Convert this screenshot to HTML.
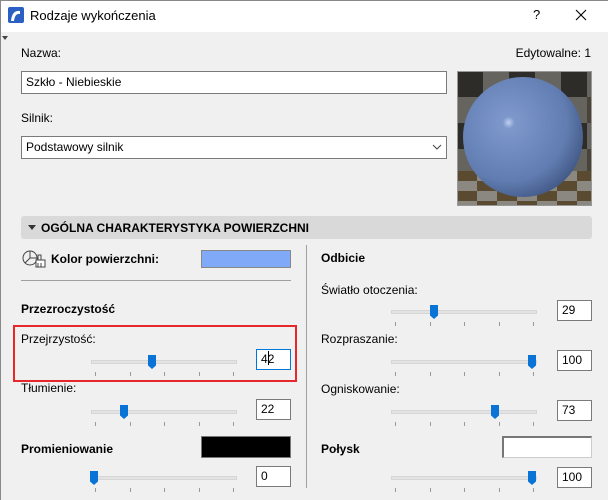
<!DOCTYPE html><html><head><meta charset="utf-8"><style>
*{box-sizing:border-box;margin:0;padding:0}
body{width:608px;height:500px;overflow:hidden;background:#f0f0f0;font-family:"Liberation Sans",sans-serif;font-size:12px;color:#000;position:relative}
.a{position:absolute;white-space:nowrap}
.inp{position:absolute;background:#fff;border:1px solid #7a7a7a;padding-left:4px;line-height:18px}
.b{font-weight:bold}
.tr{position:absolute;height:4px;background:#e3e3e3;border:1px solid #d6d6d6}
.th{position:absolute;width:8px;height:14px;background:#0a74d6;clip-path:polygon(0 0,100% 0,100% 75%,50% 100%,0 75%)}
.tk{position:absolute;width:1px;height:4px;background:#999}
</style></head><body>
<div class="a" style="left:0;top:0;width:608px;height:32px;background:#fff;border-top:1px solid #888"></div>
<div class="a" style="left:0;top:0;width:1px;height:500px;background:#888"></div>
<svg class="a" style="left:8px;top:7px" width="16" height="16"><rect width="16" height="16" rx="2" fill="#2a5fc4"/><path d="M3 14 Q4 3 12 4 L12 7 Q7 6 6 14Z" fill="#fff"/></svg>
<div class="a" style="left:30px;top:8px;font-size:13px">Rodzaje wykończenia</div>
<div class="a" style="left:533px;top:7px;font-size:13px">?</div>
<svg class="a" style="left:575px;top:9px" width="12" height="12"><path d="M1 1L11 11M11 1L1 11" stroke="#000" stroke-width="1.1"/></svg>
<div class="a" style="left:2px;top:36px;border:3px solid transparent;border-top:4px solid #444"></div>
<div class="a" style="left:21px;top:46px">Nazwa:</div>
<div class="a" style="right:17px;top:46px">Edytowalne: 1</div>
<div class="inp" style="left:21px;top:71px;width:426px;height:23px;line-height:21px">Szkło - Niebieskie</div>
<div class="a" style="left:21px;top:111px">Silnik:</div>
<div class="inp" style="left:21px;top:136px;width:426px;height:23px;line-height:21px">Podstawowy silnik</div>
<svg class="a" style="left:432px;top:144px" width="10" height="6"><path d="M1 1L5 5L9 1" stroke="#444" fill="none"/></svg>
<svg class="a" style="left:457px;top:71px" width="135" height="135">
<defs><pattern id="c" width="52" height="52" patternUnits="userSpaceOnUse"><rect width="52" height="52" fill="#66645f"/><rect width="26" height="26" fill="#2e2c28"/><rect x="26" y="26" width="26" height="26" fill="#4a4438"/></pattern>
<pattern id="f" width="40" height="20" patternUnits="userSpaceOnUse"><rect width="40" height="20" fill="#8a8880"/><rect width="20" height="10" fill="#5a4a30"/><rect x="20" y="10" width="20" height="10" fill="#5a4a30"/></pattern>
<radialGradient id="g" cx="0.38" cy="0.38" r="0.7"><stop offset="0" stop-color="#c0d0f0"/><stop offset="0.07" stop-color="#7e98cc"/><stop offset="0.7" stop-color="#607cb0"/><stop offset="1" stop-color="#3e5480"/></radialGradient></defs>
<rect width="135" height="135" fill="url(#c)"/><rect y="100" width="135" height="35" fill="url(#f)"/>
<circle cx="66" cy="66" r="60" fill="url(#g)"/>
<rect x="0.5" y="0.5" width="134" height="134" fill="none" stroke="#999"/></svg>
<div class="a" style="left:21px;top:216px;width:571px;height:23px;background:#d9d9d9;border-radius:3px"></div>
<div class="a" style="left:28px;top:225px;border:4px solid transparent;border-top:5px solid #333"></div>
<div class="a b" style="left:41px;top:221px">OGÓLNA CHARAKTERYSTYKA POWIERZCHNI</div>
<svg class="a" style="left:22px;top:249px" width="26" height="20"><circle cx="8" cy="9" r="7" fill="none" stroke="#444"/><path d="M8 2V9L3 14M8 9H15" stroke="#444" fill="none"/><rect x="14" y="11" width="9" height="7" fill="#fff" stroke="#444"/><path d="M16 11V6h3v5M16 14v4M19 14v4" stroke="#444" fill="none"/></svg>
<div class="a b" style="left:51px;top:252px">Kolor powierzchni:</div>
<div class="a" style="left:201px;top:250px;width:90px;height:18px;background:#80aaf8;border:1px solid #888"></div>
<div class="a" style="left:21px;top:280px;width:270px;height:1px;background:#a0a0a0"></div>
<div class="a b" style="left:21px;top:302px">Przezroczystość</div>
<div class="a" style="left:13px;top:325px;width:284px;height:57px;border:2px solid #e8272b"></div>
<div class="a" style="left:21px;top:332px">Przejrzystość:</div>
<div class="a" style="left:21px;top:381px">Tłumienie:</div>
<div class="a b" style="left:21px;top:442px">Promieniowanie</div>
<div class="a" style="left:201px;top:436px;width:90px;height:22px;background:#000;border:1px solid #777"></div>
<div class="a" style="left:306px;top:245px;width:1px;height:243px;background:#a0a0a0"></div>
<div class="a b" style="left:321px;top:251px">Odbicie</div>
<div class="a" style="left:321px;top:283px">Światło otoczenia:</div>
<div class="a" style="left:321px;top:332px">Rozpraszanie:</div>
<div class="a" style="left:321px;top:382px">Ogniskowanie:</div>
<div class="a b" style="left:321px;top:442px">Połysk</div>
<div class="a" style="left:502px;top:436px;width:90px;height:22px;background:#fff;border:1px solid #ccc;border-top:2px solid #777;border-left:2px solid #777"></div>
<div id="s"></div>
<script>
var S=[[91,362,152,256,349,"4|2",1],[91,412,124,256,399,"22"],[91,478,94,256,466,"0"],[391,312,434,557,300,"29"],[391,362,532,557,350,"100"],[391,412,495,557,400,"73"],[391,478,532,557,467,"100"]],h="";
S.forEach(function(v){h+='<div class="tr" style="left:'+v[0]+'px;top:'+(v[1]-2)+'px;width:146px"></div>';
for(var i=0;i<5;i++)h+='<div class="tk" style="left:'+(v[0]+4+i*34.5)+'px;top:'+(v[1]+10)+'px"></div>';
h+='<div class="th" style="left:'+(v[2]-4)+'px;top:'+(v[1]-7)+'px"></div>';
var t=v[5]=="4|2"?'4<span style="display:inline-block;width:1px;height:14px;background:#000;vertical-align:-2px;margin-right:-1px"></span>2':v[5];
h+='<div class="inp" style="left:'+v[3]+'px;top:'+v[4]+'px;width:35px;height:21px;'+(v[6]?'border-color:#0078d7':'')+'">'+t+'</div>';});
document.getElementById('s').innerHTML=h;
</script>
</body></html>
